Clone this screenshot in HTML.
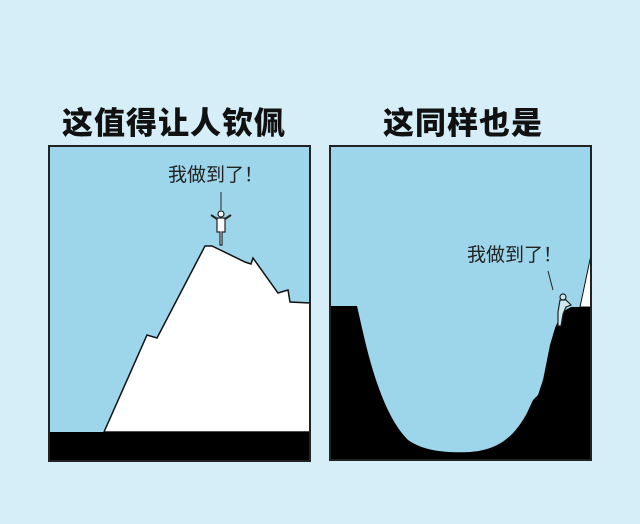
<!DOCTYPE html>
<html><head><meta charset="utf-8"><style>
html,body{margin:0;padding:0}
body{width:640px;height:524px;background:#d5eef7;position:relative;overflow:hidden;font-family:"Liberation Sans","Noto Sans CJK SC",sans-serif}
.t{position:absolute;font-weight:900;font-size:31px;color:#111;letter-spacing:1px;top:98px}
.s{position:absolute;font-size:19px;color:#222}
</style></head><body>
<div class="t" style="left:62px">这值得让人钦佩</div>
<div class="t" style="left:383px">这同样也是</div>
<svg width="640" height="524" style="position:absolute;left:0;top:0">
<rect x="49" y="146" width="261" height="315" fill="#9dd6ea"/>
<polygon points="104,432 147,335 157,338 205,246 212,246 245,262 251,264 253,258 278,293 288,290 290,302 310,303 310,432" fill="#fff" stroke="#111" stroke-width="1.5"/>
<rect x="49" y="432" width="261" height="29" fill="#000"/>
<rect x="49" y="146" width="261" height="315" fill="none" stroke="#222" stroke-width="2"/>
<line x1="221" y1="192" x2="221" y2="210" stroke="#222" stroke-width="1"/>
<g stroke="#222" stroke-width="1.2" fill="#fff">
<circle cx="221" cy="214" r="3"/>
<path d="M217,218 L225,218 L225,232 L222,232 L222,245 L220,245 L220,232 L217,232 Z"/>
<path d="M217,219 L211,215 M225,219 L231,215" fill="none" stroke-width="2"/>
</g>
<rect x="330" y="146" width="261" height="314" fill="#9dd6ea"/>
<polygon points="580,307 591,255 591,307" fill="#fff" stroke="#111" stroke-width="1"/>
<path d="M330,306 L357,306 C365,340 378,410 408,440 C425,452 450,453 470,452 C500,450 515,435 527,413 L533,400 L538,395 L543,380 L550,345 L555,328 L562,312 L571,307 L591,307 L591,460 L330,460 Z" fill="#000"/>
<rect x="330" y="146" width="261" height="314" fill="none" stroke="#222" stroke-width="2"/>
<line x1="548" y1="271" x2="553" y2="290" stroke="#222" stroke-width="1"/>
<g stroke="#222" stroke-width="1.2" fill="#cfe8f0">
<circle cx="563" cy="297" r="3"/>
<path d="M560,300 L566,300 L571,305 L566,307 L563,314 L561,326 L558,326 L558,312 Z"/>
</g>
</svg>
<div class="s" style="left:168px;top:160px">我做到了！</div>
<div class="s" style="left:467px;top:240px">我做到了！</div>
</body></html>
